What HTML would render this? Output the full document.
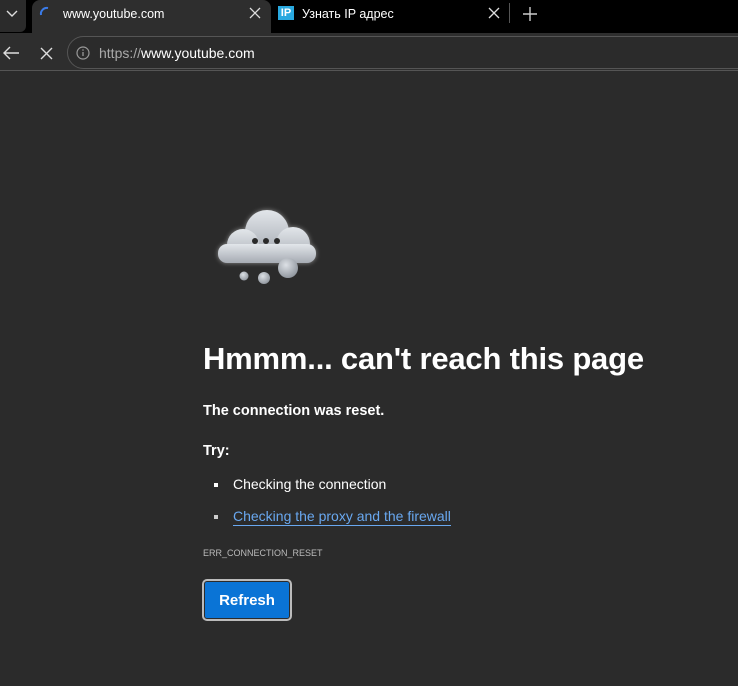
<!DOCTYPE html>
<html><head><style>
*{margin:0;padding:0;box-sizing:border-box}
body{width:738px;height:686px;background:#2b2b2b;font-family:"Liberation Sans",sans-serif;color:#fff;position:relative;overflow:hidden}
.tabs{position:absolute;left:0;top:0;width:738px;height:33px;background:#000}
.dd{position:absolute;left:0;top:0;width:26px;height:32px;background:#2b2b2b;border-radius:0 0 6px 0}
.tab{position:absolute;left:32px;top:0;width:239px;height:34px;background:#2e2e2e;border-radius:8px 8px 0 0}
.t{position:absolute;font-size:12.5px;color:#fff}
.tool{position:absolute;left:0;top:33px;width:738px;height:38px;background:#2e2e2e;border-bottom:1px solid #555}
.addr{position:absolute;left:67px;top:36px;width:690px;height:33px;border:1px solid #555;border-radius:17px;background:#2b2b2b}
.h1{position:absolute;left:203px;top:341px;font-size:31px;font-weight:bold;letter-spacing:-0.2px}
.p{position:absolute;left:203px;font-size:14.5px}
</style></head><body>
<div class="tabs">
<div class="dd"></div>
<svg style="position:absolute;left:5px;top:9px" width="14" height="10"><path d="M2 2l5 5 5-5" stroke="#ddd" stroke-width="1.4" fill="none"/></svg>
<div class="tab"></div>
<svg style="position:absolute;left:38px;top:5px" width="14" height="14"><path d="M3 10 A6 6 0 0 1 10 3" stroke="#3a7be8" stroke-width="2" fill="none"/></svg>
<div class="t" style="left:63px;top:7px">www.youtube.com</div>
<svg style="position:absolute;left:249px;top:7px" width="12" height="12"><path d="M1 1l10 10M11 1L1 11" stroke="#ddd" stroke-width="1.3"/></svg>
<div style="position:absolute;left:278px;top:6px;width:16px;height:14px;background:#29a9e0;color:#fff;font-size:11px;font-weight:bold;line-height:14px;text-align:center">IP</div>
<div class="t" style="left:302px;top:7px">Узнать IP адрес</div>
<svg style="position:absolute;left:488px;top:7px" width="12" height="12"><path d="M1 1l10 10M11 1L1 11" stroke="#ddd" stroke-width="1.3"/></svg>
<div style="position:absolute;left:509px;top:3px;width:1px;height:20px;background:#555"></div>
<svg style="position:absolute;left:522px;top:6px" width="16" height="16"><path d="M8 1v14M1 8h14" stroke="#ccc" stroke-width="1.4"/></svg>
</div>
<div class="tool"></div>
<div class="addr"></div>
<svg style="position:absolute;left:2px;top:45px" width="18" height="16"><path d="M17 8H2M8 2L2 8l6 6" stroke="#ddd" stroke-width="1.4" fill="none"/></svg>
<svg style="position:absolute;left:40px;top:47px" width="13" height="13"><path d="M1 1l11 11M12 1L1 12" stroke="#ddd" stroke-width="1.4"/></svg>
<svg style="position:absolute;left:76px;top:46px" width="14" height="14"><circle cx="7" cy="7" r="6" stroke="#999" stroke-width="1.2" fill="none"/><path d="M7 6v4" stroke="#999" stroke-width="1.3"/><circle cx="7" cy="4" r=".8" fill="#999"/></svg>
<div style="position:absolute;left:99px;top:45px;font-size:14px;color:#aaa">https://<span style="color:#fff">www.youtube.com</span></div>
<svg style="position:absolute;left:200px;top:200px" width="130" height="90">
<defs><linearGradient id="g" x1="0" y1="0" x2="0" y2="1"><stop offset="0" stop-color="#e2e6ea"/><stop offset="1" stop-color="#a6abb3"/></linearGradient>
<radialGradient id="b" cx="0.4" cy="0.35" r="0.7"><stop offset="0" stop-color="#dde1e6"/><stop offset="1" stop-color="#8d939b"/></radialGradient>
<filter id="s"><feGaussianBlur stdDeviation="2.5"/></filter></defs>
<g filter="url(#s)" opacity=".45" fill="#fff">
<circle cx="67" cy="32" r="22"/><circle cx="43" cy="45" r="16"/><circle cx="93" cy="44" r="17"/><rect x="18" y="44" width="98" height="19" rx="9"/></g>
<g fill="url(#g)">
<circle cx="67" cy="32" r="22"/><circle cx="43" cy="45" r="16"/><circle cx="93" cy="44" r="17"/><rect x="18" y="44" width="98" height="19" rx="9"/></g>
<circle cx="55" cy="41" r="3" fill="#2a2a2a"/><circle cx="66" cy="41" r="3" fill="#2a2a2a"/><circle cx="77" cy="41" r="3" fill="#2a2a2a"/>
<circle cx="88" cy="68" r="10" fill="url(#b)"/><circle cx="64" cy="78" r="6" fill="url(#b)"/><circle cx="44" cy="76" r="4.5" fill="url(#b)"/>
</svg>
<div class="h1">Hmmm... can't reach this page</div>
<div class="p" style="top:403px;font-weight:bold">The connection was reset.</div>
<div class="p" style="top:443px;font-weight:bold">Try:</div>
<div style="position:absolute;left:214px;top:483px;width:4px;height:4px;background:#fff"></div>
<div class="p" style="left:233px;top:476px;font-size:14px">Checking the connection</div>
<div style="position:absolute;left:214px;top:515px;width:4px;height:4px;background:#ccc"></div>
<div class="p" style="left:233px;top:508px;font-size:14px;color:#69a8f0;border-bottom:1px solid #69a8f0;padding-bottom:1px">Checking the proxy and the firewall</div>
<div class="p" style="top:548px;font-size:9px;color:#bbb">ERR_CONNECTION_RESET</div>
<div style="position:absolute;left:202px;top:579px;width:90px;height:42px;border:2px solid #bbb;border-radius:5px;padding:1px"><div style="width:100%;height:100%;background:#0a74d6;border-radius:2px;color:#fff;font-weight:bold;font-size:15px;text-align:center;line-height:38px">Refresh</div></div>
</body></html>
